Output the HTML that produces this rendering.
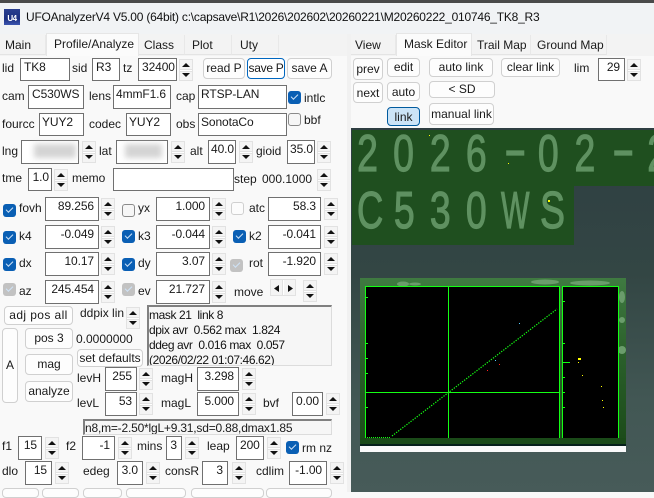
<!DOCTYPE html>
<html><head><meta charset="utf-8"><style>
html,body{margin:0;padding:0}
body{width:654px;height:492px;overflow:hidden;position:relative;background:#f9f9f9;font-family:"Liberation Sans",sans-serif;font-size:12px;color:#1a1a1a}
body div,body span.c{position:absolute;box-sizing:border-box}
.l{white-space:nowrap;line-height:16px;height:16px}
.i{background:#fff;border:1px solid #707070;line-height:17px;padding:0 4px 0 3px;white-space:nowrap;overflow:hidden;letter-spacing:-.1px}
.r{text-align:right}
.b{background:#fdfdfd;border:1px solid #d0d0d0;border-radius:4px;text-align:center;white-space:nowrap;overflow:hidden}
.s{width:14px;height:22px;border:1px solid #e2e2e2;background:linear-gradient(#f4f4f4 0 9px,#e2e2e2 9px 10px,#fff 10px 11px,#e2e2e2 11px 12px,#f4f4f4 12px)}
.s::before,.s::after{content:"";position:absolute;left:2px;width:8px;height:4px;background:#111}
.s::before{top:3px;clip-path:polygon(50% 0,100% 100%,0 100%)}
.s::after{bottom:3px;clip-path:polygon(0 0,100% 0,50% 100%)}
.c{width:13px;height:13px;border-radius:3px;background:#0a5fb4}
.c::after{content:"";position:absolute;left:3px;top:3px;width:6px;height:3px;border-left:1px solid #cfe3f7;border-bottom:1px solid #cfe3f7;transform:rotate(-45deg)}
.g{background:#c2c2c2}
.u{background:#f6f6f6;border:1px solid #8a8a8a}
.u::after{display:none}
.t{background:#f3f3f3;border-right:1px solid #e8e8e8;border-bottom:1px solid #e4e4e4;height:20px;top:35px;line-height:20px;white-space:nowrap}
.a{background:#fbfbfb;border:1px solid #e6e6e6;border-bottom:none;height:23px;top:33px;line-height:20px;white-space:nowrap}
</style></head><body>
<div style="left:0;top:0;width:654px;height:3px;background:#4a4a4a"></div>
<div style="left:0;top:3px;width:654px;height:31px;background:#f1f3f5"></div>
<div style="left:4px;top:9px;width:16px;height:16px;background:linear-gradient(#2a3f8f,#1c2f80 60%,#3b55b0);color:#fff;font:bold 8px/20px 'Liberation Sans',sans-serif;text-align:center;letter-spacing:-.5px">U4</div>
<div class="l" style="left:26px;top:9px;font-size:12px;letter-spacing:-.22px;color:#111">UFOAnalyzerV4 V5.00 (64bit) c:\capsave\R1\2026\202602\20260221\M20260222_010746_TK8_R3</div>
<div style="left:0;top:34px;width:654px;height:22px;background:#f3f3f3"></div>

<div class="t" style="left:0;width:46px;padding-left:5px">Main</div>
<div class="a" style="left:46px;width:93px;padding-left:7px">Profile/Analyze</div>
<div class="t" style="left:139px;width:46px;padding-left:5px">Class</div>
<div class="t" style="left:185px;width:47px;padding-left:7px">Plot</div>
<div class="t" style="left:232px;width:47px;padding-left:8px">Uty</div>
<div class="t" style="left:351px;width:45px;padding-left:4px">View</div>
<div class="a" style="left:396px;width:76px;padding-left:7px">Mask Editor</div>
<div class="t" style="left:472px;width:59px;padding-left:5px">Trail Map</div>
<div class="t" style="left:531px;width:76px;padding-left:6px">Ground Map</div>
<div style="left:347px;top:34px;width:4px;height:458px;background:#f1f1f1"></div>

<!-- row 1 -->
<div class="l" style="left:2px;top:60px">lid</div><div class="i" style="left:20px;top:58px;width:50px;height:23px">TK8</div>
<div class="l" style="left:72px;top:60px">sid</div><div class="i" style="left:92px;top:58px;width:28px;height:23px">R3</div>
<div class="l" style="left:123px;top:60px">tz</div><div class="i r" style="left:138px;top:58px;width:39px;height:23px">32400</div>
<div class="s" style="left:179px;top:59px"></div>
<div class="b" style="left:203px;top:58px;width:42px;height:21px;line-height:19px">read P</div>
<div class="b" style="left:247px;top:58px;width:38px;height:21px;line-height:19px;border:1px solid #0067c0;background:#fff;letter-spacing:-.3px">save P</div>
<div class="b" style="left:287px;top:58px;width:45px;height:21px;line-height:19px">save A</div>
<!-- row 2 -->
<div class="l" style="left:2px;top:88px">cam</div><div class="i" style="left:28px;top:85px;width:56px;height:24px">C530WS</div>
<div class="l" style="left:89px;top:88px">lens</div><div class="i" style="left:113px;top:85px;width:58px;height:24px;padding:0 2px">4mmF1.6</div>
<div class="l" style="left:176px;top:88px">cap</div><div class="i" style="left:198px;top:85px;width:89px;height:24px;padding:0 2px">RTSP-LAN</div>
<span class="c" style="left:288px;top:91px"></span><div class="l" style="left:304px;top:90px">intlc</div>
<!-- row 3 -->
<div class="l" style="left:2px;top:116px">fourcc</div><div class="i" style="left:39px;top:113px;width:45px;height:23px;padding:0 2px">YUY2</div>
<div class="l" style="left:89px;top:116px">codec</div><div class="i" style="left:126px;top:113px;width:45px;height:23px;padding:0 2px">YUY2</div>
<div class="l" style="left:176px;top:116px">obs</div><div class="i" style="left:198px;top:113px;width:89px;height:23px;padding:0 2px">SonotaCo</div>
<span class="c u" style="left:288px;top:113px"></span><div class="l" style="left:304px;top:112px">bbf</div>
<!-- row 4 -->
<div class="l" style="left:2px;top:143px">lng</div><div class="i" style="left:21px;top:140px;width:58px;height:24px"></div>
<div style="left:34px;top:144px;width:42px;height:14px;background:#d4d4d4;filter:blur(3px)"></div><div class="s" style="left:82px;top:141px"></div>
<div class="l" style="left:99px;top:143px">lat</div><div class="i" style="left:116px;top:140px;width:52px;height:24px"></div>
<div style="left:125px;top:144px;width:37px;height:14px;background:#d4d4d4;filter:blur(3px)"></div><div class="s" style="left:171px;top:141px"></div>
<div class="l" style="left:190px;top:143px">alt</div><div class="i r" style="left:208px;top:140px;width:28px;height:24px;padding:0 2px">40.0</div><div class="s" style="left:239px;top:141px"></div>
<div class="l" style="left:256px;top:143px">gioid</div><div class="i r" style="left:287px;top:140px;width:28px;height:24px;padding:0 2px">35.0</div><div class="s" style="left:317px;top:141px"></div>
<!-- row 5 -->
<div class="l" style="left:2px;top:170px">tme</div><div class="i r" style="left:28px;top:168px;width:24px;height:23px;padding:0 2px">1.0</div><div class="s" style="left:54px;top:169px"></div>
<div class="l" style="left:72px;top:170px">memo</div><div class="i" style="left:113px;top:168px;width:121px;height:23px"></div>
<div class="l" style="left:234px;top:171px">step</div><div class="l" style="left:262px;top:171px">000.1000</div><div class="s" style="left:317px;top:169px"></div>
<!-- row 6 -->
<span class="c" style="left:3px;top:204px"></span><div class="l" style="left:19px;top:200px">fovh</div><div class="i r" style="left:45px;top:197px;width:54px;height:24px">89.256</div><div class="s" style="left:101px;top:198px"></div>
<span class="c u" style="left:122px;top:204px"></span><div class="l" style="left:138px;top:200px">yx</div><div class="i r" style="left:156px;top:197px;width:54px;height:24px">1.000</div><div class="s" style="left:212px;top:198px"></div>
<span class="c u" style="left:231px;top:202px;border-color:#d0d0d0;background:#fcfcfc"></span><div class="l" style="left:249px;top:200px">atc</div><div class="i r" style="left:268px;top:197px;width:53px;height:24px">58.3</div><div class="s" style="left:324px;top:198px"></div>
<!-- row 7 -->
<span class="c" style="left:3px;top:231px"></span><div class="l" style="left:19px;top:228px">k4</div><div class="i r" style="left:45px;top:225px;width:54px;height:24px">-0.049</div><div class="s" style="left:101px;top:226px"></div>
<span class="c" style="left:122px;top:230px"></span><div class="l" style="left:138px;top:228px">k3</div><div class="i r" style="left:156px;top:225px;width:54px;height:24px">-0.044</div><div class="s" style="left:212px;top:226px"></div>
<span class="c" style="left:233px;top:230px"></span><div class="l" style="left:249px;top:228px">k2</div><div class="i r" style="left:268px;top:225px;width:53px;height:24px">-0.041</div><div class="s" style="left:324px;top:226px"></div>
<!-- row 8 -->
<span class="c" style="left:3px;top:258px"></span><div class="l" style="left:19px;top:255px">dx</div><div class="i r" style="left:45px;top:252px;width:54px;height:24px">10.17</div><div class="s" style="left:101px;top:253px"></div>
<span class="c" style="left:122px;top:258px"></span><div class="l" style="left:138px;top:255px">dy</div><div class="i r" style="left:156px;top:252px;width:54px;height:24px">3.07</div><div class="s" style="left:212px;top:253px"></div>
<span class="c g" style="left:230px;top:259px"></span><div class="l" style="left:249px;top:255px">rot</div><div class="i r" style="left:268px;top:252px;width:53px;height:24px">-1.920</div><div class="s" style="left:324px;top:253px"></div>
<!-- row 9 -->
<span class="c g" style="left:3px;top:283px"></span><div class="l" style="left:19px;top:283px">az</div><div class="i r" style="left:45px;top:280px;width:54px;height:24px">245.454</div><div class="s" style="left:101px;top:281px"></div>
<span class="c g" style="left:122px;top:283px"></span><div class="l" style="left:138px;top:283px">ev</div><div class="i r" style="left:156px;top:280px;width:54px;height:24px">21.727</div><div class="s" style="left:212px;top:281px"></div>
<div class="l" style="left:234px;top:284px">move</div>
<div style="left:270px;top:279px;width:26px;height:17px;border:1px solid #e2e2e2;background:linear-gradient(90deg,#f4f4f4 0 11px,#e2e2e2 11px 12px,#fff 12px 13px,#f4f4f4 13px)"></div>
<div style="left:274px;top:285px;width:5px;height:7px;background:#111;clip-path:polygon(100% 0,100% 100%,0 50%)"></div>
<div style="left:288px;top:285px;width:5px;height:7px;background:#111;clip-path:polygon(0 0,100% 50%,0 100%)"></div>
<div class="s" style="left:303px;top:280px"></div>
<!-- row 10 -->
<div class="b" style="left:4px;top:306px;width:69px;height:19px;line-height:17px;letter-spacing:.4px">adj pos all</div>
<div class="l" style="left:80px;top:305px">ddpix lin</div><div class="s" style="left:126px;top:307px"></div>
<div style="left:147px;top:305px;width:185px;height:61px;background:#f6f6f6;border:1px solid #dcdcdc;border-top:2px solid #808080;border-left:2px solid #808080;line-height:15px;padding:1px 0 0 0;white-space:pre;overflow:hidden;color:#111;letter-spacing:-.4px">mask 21  link 8
dpix avr  0.562 max  1.824
ddeg avr  0.016 max  0.057
(2026/02/22 01:07:46.62)</div>
<div class="b" style="left:2px;top:328px;width:16px;height:75px;line-height:73px">A</div>
<div class="b" style="left:25px;top:328px;width:48px;height:21px;line-height:19px">pos 3</div>
<div class="l" style="left:76px;top:331px">0.0000000</div>
<div class="b" style="left:77px;top:349px;width:66px;height:18px;line-height:16px">set defaults</div>
<div class="b" style="left:25px;top:354px;width:48px;height:21px;line-height:19px">mag</div>
<div class="b" style="left:25px;top:381px;width:48px;height:21px;line-height:19px">analyze</div>
<div class="l" style="left:77px;top:370px">levH</div><div class="i r" style="left:105px;top:367px;width:32px;height:24px">255</div><div class="s" style="left:139px;top:368px"></div>
<div class="l" style="left:161px;top:370px">magH</div><div class="i r" style="left:197px;top:367px;width:42px;height:24px">3.298</div><div class="s" style="left:242px;top:368px"></div>
<div class="l" style="left:77px;top:395px">levL</div><div class="i r" style="left:105px;top:392px;width:32px;height:24px">53</div><div class="s" style="left:139px;top:393px"></div>
<div class="l" style="left:161px;top:395px">magL</div><div class="i r" style="left:197px;top:392px;width:42px;height:24px">5.000</div><div class="s" style="left:242px;top:393px"></div>
<div class="l" style="left:263px;top:395px">bvf</div><div class="i r" style="left:292px;top:392px;width:31px;height:24px">0.00</div><div class="s" style="left:326px;top:393px"></div>
<div style="left:83px;top:419px;width:249px;height:16px;background:#f6f6f6;border:1px solid #dcdcdc;border-top:2px solid #808080;border-left:2px solid #808080;line-height:15px;padding-left:0;white-space:nowrap;overflow:hidden;letter-spacing:-.2px">n8,m=-2.50*lgL+9.31,sd=0.88,dmax1.85</div>
<!-- f1 row -->
<div class="l" style="left:2px;top:438px">f1</div><div class="i r" style="left:18px;top:436px;width:24px;height:24px">15</div><div class="s" style="left:45px;top:437px"></div>
<div class="l" style="left:66px;top:438px">f2</div><div class="i r" style="left:82px;top:436px;width:33px;height:24px">-1</div><div class="s" style="left:118px;top:437px"></div>
<div class="l" style="left:137px;top:438px">mins</div><div class="i r" style="left:166px;top:436px;width:16px;height:24px">3</div><div class="s" style="left:185px;top:437px"></div>
<div class="l" style="left:207px;top:438px">leap</div><div class="i r" style="left:236px;top:436px;width:28px;height:24px">200</div><div class="s" style="left:267px;top:437px"></div>
<span class="c" style="left:286px;top:441px"></span><div class="l" style="left:302px;top:440px">rm nz</div>
<!-- dlo row -->
<div class="l" style="left:2px;top:463px">dlo</div><div class="i r" style="left:25px;top:461px;width:27px;height:24px">15</div><div class="s" style="left:55px;top:462px"></div>
<div class="l" style="left:83px;top:463px">edeg</div><div class="i r" style="left:117px;top:461px;width:26px;height:24px">3.0</div><div class="s" style="left:146px;top:462px"></div>
<div class="l" style="left:165px;top:463px">consR</div><div class="i r" style="left:202px;top:461px;width:26px;height:24px">3</div><div class="s" style="left:232px;top:462px"></div>
<div class="l" style="left:256px;top:463px">cdlim</div><div class="i r" style="left:289px;top:461px;width:38px;height:24px">-1.00</div><div class="s" style="left:330px;top:462px"></div>
<!-- bottom clipped buttons -->
<div class="b" style="left:2px;top:488px;width:37px;height:10px"></div>
<div class="b" style="left:42px;top:488px;width:37px;height:10px"></div>
<div class="b" style="left:83px;top:488px;width:39px;height:10px"></div>
<div class="b" style="left:126px;top:488px;width:60px;height:10px"></div>
<div class="b" style="left:191px;top:488px;width:73px;height:10px"></div>
<div class="b" style="left:266px;top:488px;width:66px;height:10px"></div>

<!-- right controls -->
<div class="b" style="left:353px;top:58px;width:30px;height:22px;line-height:21px">prev</div>
<div class="b" style="left:353px;top:82px;width:30px;height:21px;line-height:20px">next</div>
<div class="b" style="left:387px;top:58px;width:33px;height:19px;line-height:17px">edit</div>
<div class="b" style="left:387px;top:82px;width:33px;height:19px;line-height:18px">auto</div>
<div class="b" style="left:387px;top:107px;width:33px;height:19px;line-height:18px;background:#cce4f7;border-color:#005a9e">link</div>
<div class="b" style="left:429px;top:58px;width:64px;height:19px;line-height:17px">auto link</div>
<div class="b" style="left:429px;top:81px;width:66px;height:17px;line-height:15px">&lt; SD</div>
<div class="b" style="left:429px;top:103px;width:65px;height:22px;line-height:20px">manual link</div>
<div class="b" style="left:501px;top:58px;width:59px;height:19px;line-height:17px">clear link</div>
<div class="l" style="left:574px;top:60px">lim</div><div class="i r" style="left:598px;top:58px;width:27px;height:23px">29</div><div class="s" style="left:627px;top:59px"></div>

<!-- image area -->
<div style="left:351px;top:128px;width:303px;height:364px;background:linear-gradient(#2e3e42,#334644 40%,#425754 75%,#475b59)"></div>
<div style="left:352px;top:130px;width:302px;height:56px;background:#1f4f1f"></div>
<div style="left:352px;top:186px;width:222px;height:59px;background:#1f4f1f"></div>
<svg style="position:absolute;left:0;top:0" width="654" height="492" xmlns="http://www.w3.org/2000/svg">
<g font-family="Liberation Sans" font-size="52" fill="#5f9161" stroke="#5f9161" stroke-width="1.2">
<text transform="translate(0,171) scale(.72,1)" x="496 546 597 647 747 798 899">2026022</text>
<text transform="translate(504,167) scale(1.3,1)">-</text>
<text transform="translate(612,167) scale(1.3,1)">-</text>
<text transform="translate(357,228) scale(.7,1)">C</text>
<text transform="translate(0,228) scale(.72,1)" x="547 597 647">530</text>
<text transform="translate(501,228) scale(.58,1)">W</text>
<text transform="translate(540,228) scale(.72,1)">S</text>
</g>
<rect x="429" y="135" width="1" height="1" fill="#ff0"/><rect x="508" y="163" width="1" height="1" fill="#ff0"/><rect x="548" y="200" width="2" height="2" fill="#ff0"/>
<defs><linearGradient id="m" x1="0" y1="0" x2="0" y2="1"><stop offset="0" stop-color="#3f7a41"/><stop offset=".5" stop-color="#2a5f2a"/><stop offset="1" stop-color="#1c4c1a"/></linearGradient></defs>
<rect x="360" y="278" width="266" height="160" fill="url(#m)"/>
<rect x="360" y="438" width="266" height="6" fill="#1a4a18"/>
<rect x="360" y="444" width="266" height="2" fill="#06201a"/>
<rect x="360" y="446" width="266" height="6" fill="#f9f9f9"/>
<g fill="#6a9c6b"><ellipse cx="403" cy="284" rx="6" ry="2.5"/><ellipse cx="415" cy="284" rx="6" ry="1.5"/><ellipse cx="545" cy="282" rx="14" ry="2.5"/><ellipse cx="590" cy="283" rx="20" ry="2.5"/><ellipse cx="622" cy="297" rx="3" ry="6"/><ellipse cx="622" cy="350" rx="4" ry="4"/><ellipse cx="622" cy="320" rx="3" ry="3"/></g>
<rect x="365" y="286" width="194" height="152" fill="#000"/>
<rect x="562" y="286" width="56" height="152" fill="#000"/>
<g fill="none" stroke="#14ff14" stroke-width="1">
<path d="M365.500 438V286.500H559.500V438M448.500 286V438M365 392.500H559M562.500 438V286.500H618.500V438M563 362.500H570"/>
<path d="M366 297.500h2M366 343.500h2M366 358.500h2M366 373.500h2M366 407.500h2M563 301.500h2M563 343.500h2M563 377.500h2M563 392.500h2M563 407.500h2"/>
<path stroke-dasharray="1 1" d="M367 437.500H390"/>
<path stroke-dasharray="1.300 1.300" stroke-width="1.200" d="M392 436L557 309"/>
</g>
<g fill="#ff0"><rect x="578" y="358" width="3" height="2"/><rect x="579" y="358" width="2" height="1"/><rect x="579" y="359" width="1" height="1"/><rect x="578" y="362" width="1" height="1"/><rect x="582" y="375" width="1" height="1"/><rect x="601" y="386" width="1" height="1"/><rect x="602" y="400" width="1" height="1"/><rect x="603" y="407" width="1" height="1"/></g>
<g><rect x="519" y="323" width="1" height="1" fill="#5cf"/><rect x="495" y="360" width="1" height="1" fill="#5cf"/><rect x="499" y="364" width="1" height="1" fill="#f22"/><rect x="487" y="370" width="1" height="1" fill="#f22"/></g>
</svg>
</body></html>
